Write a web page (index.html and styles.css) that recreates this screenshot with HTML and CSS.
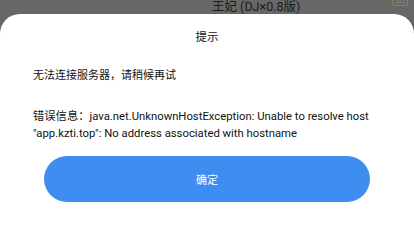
FILE: index.html
```html
<!DOCTYPE html>
<html lang="zh">
<head>
<meta charset="utf-8">
<link rel="stylesheet" href="styles.css">
</head>
<body>
<div class="screen">
  <div class="behind">
    <div class="song">王妃 (DJ×0.8版)</div>
    <div class="badge">SQ</div>
  </div>
  <div class="sheet">
    <div class="title">提示</div>
    <div class="msg">无法连接服务器，请稍候再试</div>
    <div class="err">错误信息：java.net.UnknownHostException: Unable to resolve host "app.kzti.top": No address associated with hostname</div>
    <div class="actions"><button class="ok">确定</button></div>
  </div>
</div>
</body>
</html>
```
FILE: styles.css
```css
html, body {
  margin: 0;
  padding: 0;
  overflow: hidden;
  background: #676767;
  font-family: Roboto, "Noto Sans CJK SC", sans-serif;
}
.screen {
  display: flex;
  flex-direction: column;
  min-height: 100vh;
}
.behind {
  height: 14px;
  flex: none;
  position: relative;
  overflow: hidden;
}
.song {
  margin: -2px 0 0 212px;
  font-size: 12.5px;
  line-height: 17px;
  color: #1c1c1c;
  white-space: nowrap;
}
.badge {
  position: absolute;
  left: 392px;
  top: -5px;
  font-size: 8px;
  line-height: 9px;
  padding: 0 2px;
  border: 1px solid #8a7d5c;
  border-radius: 2px;
  color: #8a7d5c;
}
.sheet {
  flex: 1;
  background: #fff;
  border-radius: 20px 20px 0 0;
  padding: 0 33px;
}
.title {
  text-align: center;
  font-size: 11.5px;
  line-height: 18px;
  color: #111;
  padding-top: 14px;
}
.msg {
  margin-top: 21px;
  font-size: 11px;
  line-height: 17px;
  color: #111;
}
.err {
  margin-top: 24px;
  font-size: 11.3px;
  line-height: 17px;
  color: #111;
}
.actions {
  display: flex;
  justify-content: center;
  margin-top: 14px;
}
.ok {
  width: 326px;
  height: 46px;
  border: none;
  border-radius: 23px;
  background: #3d8ef0;
  color: #fff;
  font-family: Roboto, "Noto Sans CJK SC", sans-serif;
  font-size: 11px;
}
```
